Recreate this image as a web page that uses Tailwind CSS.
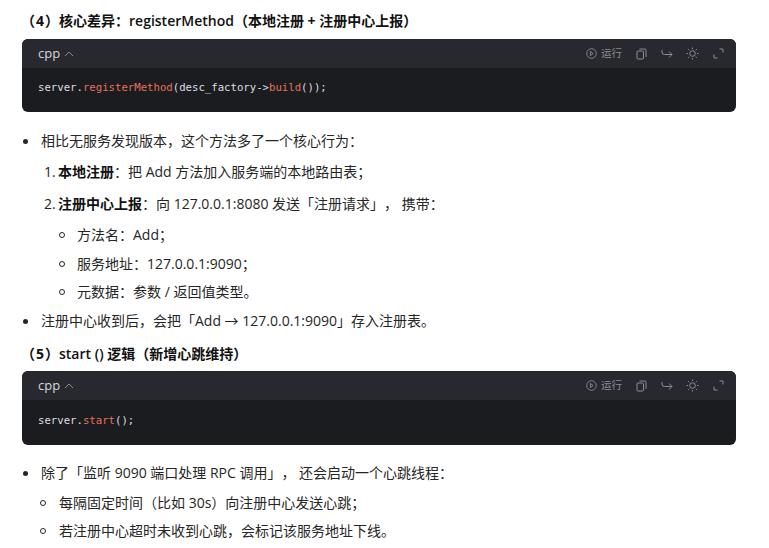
<!DOCTYPE html>
<html lang="zh">
<head>
<meta charset="utf-8">
<script src="https://cdn.jsdelivr.net/npm/@tailwindcss/browser@4"></script>
</head>
<body class="bg-white h-[548px] overflow-hidden text-[14px] text-[#262626] [text-spacing-trim:space-all] font-['Open_Sans','Noto_Sans_CJK_SC',sans-serif]">
<main class="pl-[22px] pr-[33px] pt-[10px]">

    <h4 class="h-[22px] leading-[22px] font-bold text-[#111] -ml-[1px]">（<span class="px-[1px]">4</span>）核心差异：<span class="font-semibold">registerMethod</span>（本地注册 + 注册中心上报）</h4>

    <div class="mt-[7px] h-[73px] rounded-md bg-[#1b1c20] overflow-hidden">
        <div class="h-[29px] bg-[#28292e] flex items-center justify-between pl-[16px] pr-[12px] text-[#d4d6dc]">
            <div class="flex items-center gap-[4px] text-[13px]">
                <span>cpp</span>
                <svg class="w-[10px] h-[10px] text-[#8b8d94]" viewBox="0 0 10 10" fill="none" stroke="currentColor"><path d="M1 7l4-4 4 4"/></svg>
            </div>
            <div class="flex items-center text-[#8b8d94]">
                <svg class="w-[11px] h-[11px]" viewBox="0 0 12 12" fill="none" stroke="currentColor"><circle cx="6" cy="6" r="5.2"/><path d="M4.8 3.800l3 2.200-3 2.200z"/></svg>
                <span class="ml-[4px] text-[10.5px]">运行</span>
                <svg class="ml-[14px] w-[11px] h-[12px]" viewBox="0 0 11 12" fill="none" stroke="currentColor"><rect x="1" y="3" width="6.5" height="8" rx="1"/><path d="M3.5 1h5.500a1 1 0 0 1 1 1v7"/></svg>
                <svg class="ml-[14px] w-[12px] h-[10px]" viewBox="0 0 12 10" fill="none" stroke="currentColor"><path d="M1 1v2a2.500 2.500 0 0 0 2.500 2.500H11M8 2.500l3 3-3 3"/></svg>
                <svg class="ml-[13px] w-[13px] h-[13px]" viewBox="0 0 13 13" fill="none" stroke="currentColor"><circle cx="6.5" cy="6.5" r="2.8"/><path d="M6.500 0.500v1.500M6.500 11v1.500M0.500 6.500h1.500M11 6.500h1.500M2.200 2.200l1 1M9.800 9.800l1 1M2.200 10.800l1-1M9.800 3.200l1-1"/></svg>
                <svg class="ml-[14px] w-[11px] h-[11px]" viewBox="0 0 11 11" fill="none" stroke="currentColor"><path d="M6.500 1H10v3.500M1 6.500V10h3.500"/></svg>
            </div>
        </div>
        <pre class="pl-[16px] pt-[12px] text-[10.66px] leading-[16px] text-[#dcdee3] font-['DejaVu_Sans_Mono',monospace]">server.<span class="text-[#e8705a]">registerMethod</span>(desc_factory-&gt;<span class="text-[#e8705a]">build</span>());</pre>
    </div>

    <ul class="mt-[18px] ml-[19px]">
        <li class="relative h-[22px] leading-[22px]">
            <span class="absolute -left-[18px] top-[9px] w-[5px] h-[5px] rounded-full bg-[#262626]"></span>
            相比无服务发现版本，这个方法多了一个核心行为：
        </li>
    </ul>
    <ol class="mt-[9px] ml-[36px]">
        <li class="relative h-[22px] leading-[22px]">
            <span class="absolute -left-[14px] top-0">1.</span>
            <b class="font-bold text-[#111]">本地注册</b>：把 Add 方法加入服务端的本地路由表；
        </li>
        <li class="relative mt-[10px] h-[22px] leading-[22px]">
            <span class="absolute -left-[14px] top-0">2.</span>
            <b class="font-bold text-[#111]">注册中心上报</b>：向 127.0.0.1:8080 发送「注册请求」， 携带：
        </li>
    </ol>
    <ul class="mt-[9px] ml-[55px]">
        <li class="relative h-[22px] leading-[22px]">
            <span class="absolute -left-[18px] top-[8px] w-[6px] h-[6px] rounded-full border border-[#262626]"></span>
            方法名：Add；
        </li>
        <li class="relative mt-[7px] h-[22px] leading-[22px]">
            <span class="absolute -left-[18px] top-[8px] w-[6px] h-[6px] rounded-full border border-[#262626]"></span>
            服务地址：127.0.0.1:9090；
        </li>
        <li class="relative mt-[6px] h-[22px] leading-[22px]">
            <span class="absolute -left-[18px] top-[8px] w-[6px] h-[6px] rounded-full border border-[#262626]"></span>
            元数据：参数 / 返回值类型。
        </li>
    </ul>
    <ul class="mt-[7px] ml-[19px]">
        <li class="relative h-[22px] leading-[22px]">
            <span class="absolute -left-[18px] top-[9px] w-[5px] h-[5px] rounded-full bg-[#262626]"></span>
            注册中心收到后，会把「Add → 127.0.0.1:9090」存入注册表。
        </li>
    </ul>

    <h4 class="mt-[11px] h-[22px] leading-[22px] font-bold text-[#111] -ml-[1px]">（<span class="px-[1px]">5</span>）<span class="font-semibold">start ()</span> 逻辑（新增心跳维持）</h4>

    <div class="mt-[6px] h-[74px] rounded-md bg-[#1b1c20] overflow-hidden">
        <div class="h-[29px] bg-[#28292e] flex items-center justify-between pl-[16px] pr-[12px] text-[#d4d6dc]">
            <div class="flex items-center gap-[4px] text-[13px]">
                <span>cpp</span>
                <svg class="w-[10px] h-[10px] text-[#8b8d94]" viewBox="0 0 10 10" fill="none" stroke="currentColor"><path d="M1 7l4-4 4 4"/></svg>
            </div>
            <div class="flex items-center text-[#8b8d94]">
                <svg class="w-[11px] h-[11px]" viewBox="0 0 12 12" fill="none" stroke="currentColor"><circle cx="6" cy="6" r="5.2"/><path d="M4.8 3.800l3 2.200-3 2.200z"/></svg>
                <span class="ml-[4px] text-[10.5px]">运行</span>
                <svg class="ml-[14px] w-[11px] h-[12px]" viewBox="0 0 11 12" fill="none" stroke="currentColor"><rect x="1" y="3" width="6.5" height="8" rx="1"/><path d="M3.5 1h5.500a1 1 0 0 1 1 1v7"/></svg>
                <svg class="ml-[14px] w-[12px] h-[10px]" viewBox="0 0 12 10" fill="none" stroke="currentColor"><path d="M1 1v2a2.500 2.500 0 0 0 2.500 2.500H11M8 2.500l3 3-3 3"/></svg>
                <svg class="ml-[13px] w-[13px] h-[13px]" viewBox="0 0 13 13" fill="none" stroke="currentColor"><circle cx="6.5" cy="6.5" r="2.8"/><path d="M6.500 0.500v1.500M6.500 11v1.500M0.500 6.500h1.500M11 6.500h1.500M2.200 2.200l1 1M9.800 9.800l1 1M2.200 10.800l1-1M9.800 3.200l1-1"/></svg>
                <svg class="ml-[14px] w-[11px] h-[11px]" viewBox="0 0 11 11" fill="none" stroke="currentColor"><path d="M6.500 1H10v3.500M1 6.500V10h3.500"/></svg>
            </div>
        </div>
        <pre class="pl-[16px] pt-[13px] text-[10.66px] leading-[16px] text-[#dcdee3] font-['DejaVu_Sans_Mono',monospace]">server.<span class="text-[#e8705a]">start</span>();</pre>
    </div>

    <ul class="mt-[17px] ml-[19px]">
        <li class="relative h-[22px] leading-[22px]">
            <span class="absolute -left-[18px] top-[9px] w-[5px] h-[5px] rounded-full bg-[#262626]"></span>
            除了「监听 9090 端口处理 RPC 调用」， 还会启动一个心跳线程：
        </li>
    </ul>
    <ul class="mt-[8px] ml-[37px]">
        <li class="relative h-[22px] leading-[22px]">
            <span class="absolute -left-[19px] top-[8px] w-[6px] h-[6px] rounded-full border border-[#262626]"></span>
            每隔固定时间（比如 30s）向注册中心发送心跳；
        </li>
        <li class="relative mt-[6px] h-[22px] leading-[22px]">
            <span class="absolute -left-[19px] top-[8px] w-[6px] h-[6px] rounded-full border border-[#262626]"></span>
            若注册中心超时未收到心跳，会标记该服务地址下线。
        </li>
    </ul>
</main>
</body>
</html>
